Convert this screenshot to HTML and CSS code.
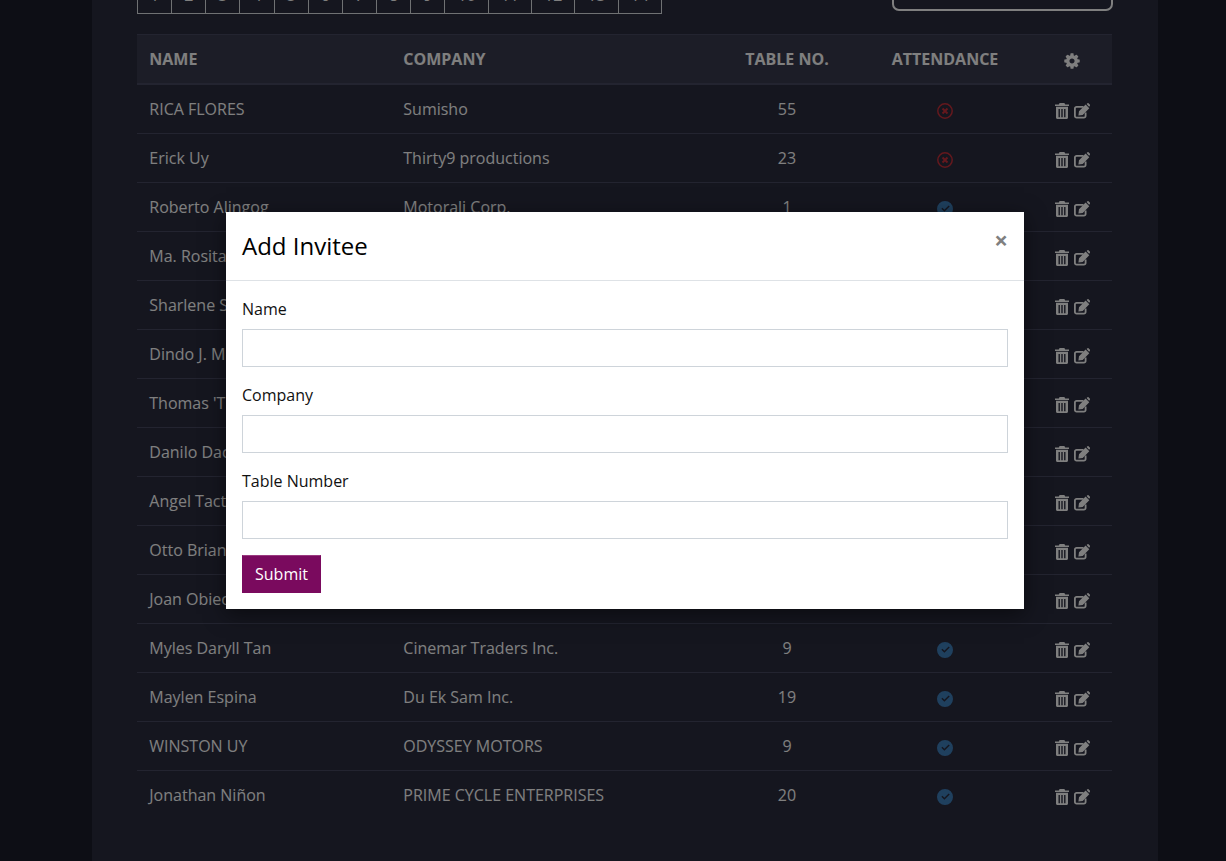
FILE: index.html
```html
<!DOCTYPE html>
<html lang="en">
<head>
<meta charset="utf-8">
<title>Invitees</title>
<link rel="stylesheet" href="styles.css">
</head>
<body>
<svg class="defs" width="0" height="0" aria-hidden="true">
  <symbol id="i-cog" viewBox="0 0 1792 1792"><path d="M1152 896q0-106-75-181t-181-75-181 75-75 181 75 181 181 75 181-75 75-181zm512-109v222q0 12-8 23t-20 13l-185 28q-19 54-39 91 35 50 107 138 10 12 10 25t-9 23q-27 37-99 108t-94 71q-12 0-26-9l-138-108q-44 23-91 38-16 136-29 186-7 28-36 28h-222q-14 0-24.500-8.500t-11.500-21.500l-28-184q-49-16-90-37l-141 107q-10 9-25 9-14 0-25-11-126-114-165-168-7-10-7-23 0-12 8-23 15-21 51-66.500t54-70.500q-27-50-41-99l-183-27q-13-2-21-12.500t-8-23.500v-222q0-12 8-23t19-13l186-28q14-46 39-92-40-57-107-138-10-12-10-24 0-10 9-23 26-36 98.500-107.500t94.500-71.500q13 0 26 10l138 107q44-23 91-38 16-136 29-186 7-28 36-28h222q14 0 24.500 8.500t11.500 21.500l28 184q49 16 90 37l142-107q9-9 24-9 13 0 25 10 129 119 165 170 7 8 7 22 0 12-8 23-15 21-51 66.500t-54 70.500q26 50 41 98l183 28q13 2 21 12.500t8 23.500z"/></symbol>
  <symbol id="i-trash" viewBox="0 0 14 16"><path fill-rule="evenodd" d="M4.600 0h4.800l.8 1.400H14V3H0V1.400h3.800zM1 3.800h12v10.700c0 .9-.6 1.500-1.500 1.500h-9C1.600 16 1 15.400 1 14.500zm2.500 2.200v8.200h1.400V6zm2.800 0v8.200h1.400V6zm2.800 0v8.200h1.400V6z"/></symbol>
  <symbol id="i-edit" viewBox="0 0 16 16"><path d="M9.500 3.900H2.600A1.700 1.700 0 0 0 .9 5.600v7.300a1.700 1.700 0 0 0 1.700 1.700h7.300a1.700 1.700 0 0 0 1.700-1.700V9.500" fill="none" stroke="#fff" stroke-width="1.800"/><path d="M5 8.200 11.600 1.600l3.700 3.700-6.600 6.600-4.300.7zM12.600 1.100l.9-.8c.3-.3.700-.3 1 0l1.500 1.500c.3.3.3.700 0 1l-.9.900z"/></symbol>
  <symbol id="i-check" viewBox="0 0 16 16"><path fill="#3f80bd" fill-rule="evenodd" d="M8 0a8 8 0 1 1 0 16A8 8 0 0 1 8 0zm4.700 5.500-1-1-4.300 4.300-2-2-1 1 3 3z"/></symbol>
  <symbol id="i-cross" viewBox="0 0 16 16"><circle cx="8" cy="8" r="7.200" fill="none" stroke="#c8303a" stroke-width="1.500"/><path d="M5.500 5.500l5 5m0-5l-5 5" fill="none" stroke="#c8303a" stroke-width="2"/></symbol>
</svg>

<main class="panel">
  <div class="toolbar">
    <ul class="pager">
      <li class="page">1</li><li class="page">2</li><li class="page">3</li><li class="page">4</li><li class="page">5</li><li class="page">6</li><li class="page">7</li><li class="page">8</li><li class="page">9</li><li class="page">10</li><li class="page">11</li><li class="page">12</li><li class="page">13</li><li class="page">14</li>
    </ul>
    <input class="search" type="text" aria-label="Search">
  </div>

  <table class="invitees">
    <colgroup>
      <col class="col-name"><col class="col-company"><col class="col-table"><col class="col-attend"><col class="col-actions">
    </colgroup>
    <thead>
      <tr>
        <th>Name</th><th>Company</th><th class="center">Table No.</th><th class="center">Attendance</th>
        <th class="center"><svg class="icon icon-cog"><use href="#i-cog"/></svg></th>
      </tr>
    </thead>
    <tbody>
      <tr><td>RICA FLORES</td><td>Sumisho</td><td class="center">55</td><td class="center"><svg class="icon"><use href="#i-cross"/></svg></td><td class="actions"><svg class="icon trash"><use href="#i-trash"/></svg><svg class="icon edit"><use href="#i-edit"/></svg></td></tr>
      <tr><td>Erick Uy</td><td>Thirty9 productions</td><td class="center">23</td><td class="center"><svg class="icon"><use href="#i-cross"/></svg></td><td class="actions"><svg class="icon trash"><use href="#i-trash"/></svg><svg class="icon edit"><use href="#i-edit"/></svg></td></tr>
      <tr><td>Roberto Alingog</td><td>Motorali Corp.</td><td class="center">1</td><td class="center"><svg class="icon"><use href="#i-check"/></svg></td><td class="actions"><svg class="icon trash"><use href="#i-trash"/></svg><svg class="icon edit"><use href="#i-edit"/></svg></td></tr>
      <tr><td>Ma. Rosita</td><td></td><td></td><td></td><td class="actions"><svg class="icon trash"><use href="#i-trash"/></svg><svg class="icon edit"><use href="#i-edit"/></svg></td></tr>
      <tr><td>Sharlene S</td><td></td><td></td><td></td><td class="actions"><svg class="icon trash"><use href="#i-trash"/></svg><svg class="icon edit"><use href="#i-edit"/></svg></td></tr>
      <tr><td>Dindo J. M</td><td></td><td></td><td></td><td class="actions"><svg class="icon trash"><use href="#i-trash"/></svg><svg class="icon edit"><use href="#i-edit"/></svg></td></tr>
      <tr><td>Thomas 'T</td><td></td><td></td><td></td><td class="actions"><svg class="icon trash"><use href="#i-trash"/></svg><svg class="icon edit"><use href="#i-edit"/></svg></td></tr>
      <tr><td>Danilo Dac</td><td></td><td></td><td></td><td class="actions"><svg class="icon trash"><use href="#i-trash"/></svg><svg class="icon edit"><use href="#i-edit"/></svg></td></tr>
      <tr><td>Angel Tact</td><td></td><td></td><td></td><td class="actions"><svg class="icon trash"><use href="#i-trash"/></svg><svg class="icon edit"><use href="#i-edit"/></svg></td></tr>
      <tr><td>Otto Brian</td><td></td><td></td><td></td><td class="actions"><svg class="icon trash"><use href="#i-trash"/></svg><svg class="icon edit"><use href="#i-edit"/></svg></td></tr>
      <tr><td>Joan Obieo</td><td></td><td></td><td></td><td class="actions"><svg class="icon trash"><use href="#i-trash"/></svg><svg class="icon edit"><use href="#i-edit"/></svg></td></tr>
      <tr><td>Myles Daryll Tan</td><td>Cinemar Traders Inc.</td><td class="center">9</td><td class="center"><svg class="icon"><use href="#i-check"/></svg></td><td class="actions"><svg class="icon trash"><use href="#i-trash"/></svg><svg class="icon edit"><use href="#i-edit"/></svg></td></tr>
      <tr><td>Maylen Espina</td><td>Du Ek Sam Inc.</td><td class="center">19</td><td class="center"><svg class="icon"><use href="#i-check"/></svg></td><td class="actions"><svg class="icon trash"><use href="#i-trash"/></svg><svg class="icon edit"><use href="#i-edit"/></svg></td></tr>
      <tr><td>WINSTON UY</td><td>ODYSSEY MOTORS</td><td class="center">9</td><td class="center"><svg class="icon"><use href="#i-check"/></svg></td><td class="actions"><svg class="icon trash"><use href="#i-trash"/></svg><svg class="icon edit"><use href="#i-edit"/></svg></td></tr>
      <tr><td>Jonathan Niñon</td><td>PRIME CYCLE ENTERPRISES</td><td class="center">20</td><td class="center"><svg class="icon"><use href="#i-check"/></svg></td><td class="actions"><svg class="icon trash"><use href="#i-trash"/></svg><svg class="icon edit"><use href="#i-edit"/></svg></td></tr>
    </tbody>
  </table>
</main>

<div class="backdrop"></div>

<section class="modal" role="dialog" aria-labelledby="modal-title">
  <header class="modal-header">
    <h2 class="modal-title" id="modal-title">Add Invitee</h2>
    <button class="close" type="button" aria-label="Close">×</button>
  </header>
  <form class="modal-body">
    <div class="field">
      <label class="field-label" for="f-name">Name</label>
      <input class="field-input" id="f-name" type="text">
    </div>
    <div class="field">
      <label class="field-label" for="f-company">Company</label>
      <input class="field-input" id="f-company" type="text">
    </div>
    <div class="field">
      <label class="field-label" for="f-table">Table Number</label>
      <input class="field-input" id="f-table" type="text">
    </div>
    <button class="submit" type="button">Submit</button>
  </form>
</section>
</body>
</html>
```
FILE: styles.css
```css
* { box-sizing: border-box; }

html, body {
  height: 100%;
  margin: 0;
  overflow: hidden;
}

body {
  background: #1a1c2a;
  color: #fff;
  font-family: "Open Sans", "Noto Sans", sans-serif;
  font-size: 16px;
  line-height: 24px;
}

.defs { display: block; height: 0; }

.panel {
  width: 1066px;
  height: 889px;
  margin: -28px 0 0 92px;
  padding: 0 46px 0 45px;
  background: #2a2c3e;
}

.toolbar {
  display: flex;
  justify-content: space-between;
  align-items: flex-start;
  height: 42px;
  margin-bottom: 20px;
}

.pager {
  display: flex;
  margin: 0;
  padding: 0;
  list-style: none;
  border-bottom: 1px solid #dee2e6;
  border-right: 1px solid #dee2e6;
}

.page {
  padding: 11px 12px 6px;
  border-left: 1px solid #dee2e6;
  color: #fff;
}

.search {
  display: block;
  width: 221px;
  height: 39px;
  margin-right: -1px;
  background: transparent;
  border: 2px solid #fff;
  border-radius: 7px;
}

.invitees {
  width: 975px;
  table-layout: fixed;
  border-collapse: separate;
  border-spacing: 0;
}

.col-name { width: 254px; }
.col-company { width: 325px; }
.col-table { width: 142px; }
.col-attend { width: 174px; }
.col-actions { width: 80px; }

.invitees th {
  padding: 12px 12px 12px 12.3px;
  background: #383a4e;
  border-top: 1px solid #464860;
  border-bottom: 2px solid #464860;
  font-weight: 700;
  text-align: left;
  text-transform: uppercase;
  height: 51px;
  vertical-align: top;
}

.invitees td {
  padding: 12px 12px 12px 12.3px;
  height: 49px;
  border-bottom: 1px solid #464860;
  white-space: nowrap;
  vertical-align: top;
}

.invitees tr:last-child td {
  height: 48px;
  border-bottom: 0;
}

.invitees th.center,
.invitees td.center {
  padding-left: 12px;
  text-align: center;
}

.invitees .actions {
  padding: 12px 0;
  text-align: center;
}

.icon {
  display: inline-block;
  width: 16px;
  height: 16px;
  fill: #fff;
  vertical-align: -4px;
}

.icon-cog {
  width: 18px;
  height: 18px;
  vertical-align: -5px;
}

.trash { width: 14px; }
.edit { margin-left: 5px; }

.backdrop {
  position: absolute;
  inset: 0;
  background: rgba(0, 0, 0, .5);
}

.modal {
  position: absolute;
  top: 212px;
  left: 226px;
  width: 798px;
  height: 397px;
  background: #fff;
  color: #212529;
  box-shadow: 0 5px 20px rgba(0, 0, 0, .5);
}

.modal-header {
  display: flex;
  justify-content: space-between;
  align-items: flex-start;
  padding: 16px;
  border-bottom: 1px solid #dee2e6;
}

.modal-title {
  margin: 0;
  color: #000;
  font-size: 24px;
  font-weight: 400;
  line-height: 36px;
}

.close {
  padding: 0;
  background: transparent;
  border: 0;
  color: #808080;
  font-family: inherit;
  font-size: 24px;
  font-weight: 700;
  line-height: 24px;
}

.modal-body { display: block; padding: 16px; }

.field { margin-bottom: 16px; }

.field-label {
  display: block;
  margin-bottom: 8px;
  color: #111;
}

.field-input {
  display: block;
  width: 100%;
  height: 38px;
  background: #fff;
  border: 1px solid #ced4da;
}

.submit {
  display: block;
  height: 38px;
  padding: 6px 12px;
  background: #7a0a5e;
  border: 1px solid #7a0a5e;
  border-top-color: #9a3a80;
  color: #fff;
  font-family: inherit;
  font-size: 16px;
  line-height: 24px;
}
```
